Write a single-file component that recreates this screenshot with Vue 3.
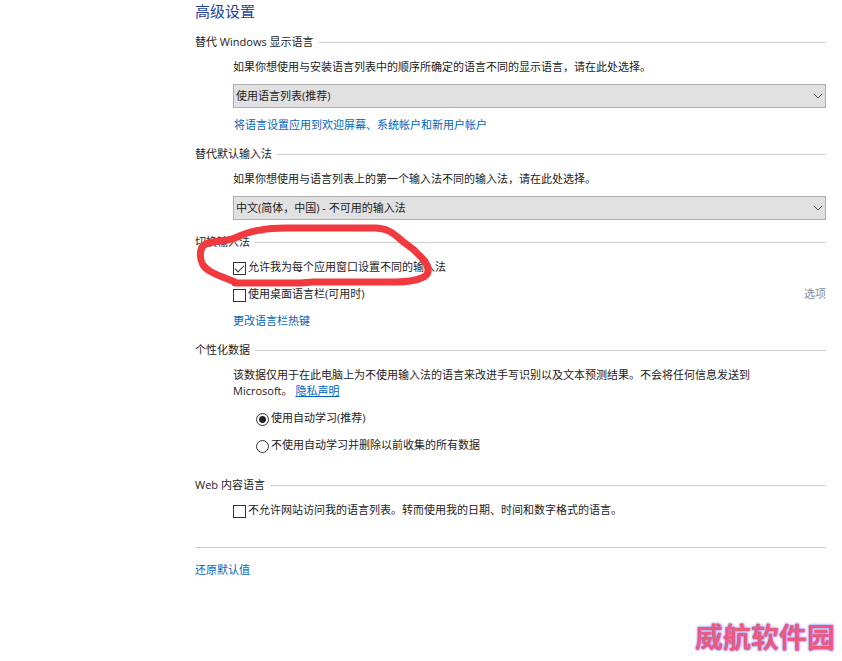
<script setup>
import { ref } from 'vue'

const displayLanguage = ref('list')
const inputMethod = ref('zh')
const perWindow = ref(true)
const languageBar = ref(false)
const learning = ref('auto')
const blockSites = ref(false)
</script>

<template>
  <main class="page">
    <h1 class="title">高级设置</h1>

    <section class="group">
      <h2 class="heading">替代 Windows 显示语言</h2>
      <div class="body">
        <label class="text" for="display-language">如果你想使用与安装语言列表中的顺序所确定的语言不同的显示语言，请在此处选择。</label>
        <div class="dropdown">
          <select id="display-language" v-model="displayLanguage">
            <option value="list">使用语言列表(推荐)</option>
          </select>
          <svg class="chevron" viewBox="0 0 10 6" aria-hidden="true"><path d="M1 1L5 5L9 1" /></svg>
        </div>
        <a class="link inset" href="#apply">将语言设置应用到欢迎屏幕、系统帐户和新用户帐户</a>
      </div>
    </section>

    <section class="group spaced">
      <h2 class="heading">替代默认输入法</h2>
      <div class="body">
        <label class="text" for="input-method">如果你想使用与语言列表上的第一个输入法不同的输入法，请在此处选择。</label>
        <div class="dropdown">
          <select id="input-method" v-model="inputMethod">
            <option value="zh">中文(简体，中国) - 不可用的输入法</option>
          </select>
          <svg class="chevron" viewBox="0 0 10 6" aria-hidden="true"><path d="M1 1L5 5L9 1" /></svg>
        </div>
      </div>
    </section>

    <section class="group marked">
      <h2 class="heading">切换输入法</h2>
      <div class="body choices">
        <label class="choice"><input v-model="perWindow" type="checkbox" />允许我为每个应用窗口设置不同的输入法</label>
        <div class="split">
          <label class="choice"><input v-model="languageBar" type="checkbox" />使用桌面语言栏(可用时)</label>
          <a class="options" href="#options">选项</a>
        </div>
        <a class="link" href="#hotkeys">更改语言栏热键</a>
      </div>
      <svg class="scribble" viewBox="0 0 240 64" aria-hidden="true">
        <path d="M40 55L30 51C20 47 12 44 8 38C5 33 4 24 8 19C14 13 30 15 40 11C50 6 56 4 66 3C75 1 83 1 91 1H180C192 1 198 6 205 12C211 18 216 19 222 26C228 32 232 35 233 42C234 49 228 51 220 53C207 56 195 55 178 55H118L106 56H40" />
      </svg>
    </section>

    <section class="group">
      <h2 class="heading">个性化数据</h2>
      <div class="body choices">
        <p class="text">该数据仅用于在此电脑上为不使用输入法的语言来改进手写识别以及文本预测结果。不会将任何信息发送到 Microsoft。 <a class="link underlined" href="#privacy">隐私声明</a></p>
        <label class="choice nested"><input v-model="learning" type="radio" name="learning" value="auto" />使用自动学习(推荐)</label>
        <label class="choice nested"><input v-model="learning" type="radio" name="learning" value="off" />不使用自动学习并删除以前收集的所有数据</label>
      </div>
    </section>

    <section class="group last">
      <h2 class="heading">Web 内容语言</h2>
      <div class="body">
        <label class="choice"><input v-model="blockSites" type="checkbox" />不允许网站访问我的语言列表。转而使用我的日期、时间和数字格式的语言。</label>
      </div>
    </section>

    <footer class="footer">
      <a class="link" href="#restore">还原默认值</a>
    </footer>

    <div class="watermark">威航软件园</div>
  </main>
</template>

<style>
body {
  margin: 0;
  background: #fff;
}
</style>

<style scoped>
.page {
  position: relative;
  box-sizing: border-box;
  min-height: 100vh;
  padding: 0 16px 0 195px;
  color: #1c1c1c;
  font-family: "Open Sans", "Noto Sans CJK SC", sans-serif;
  font-size: 11px;
  line-height: 16px;
}

.title {
  margin: 0 0 12px;
  color: #1f449c;
  font-size: 15px;
  font-weight: 400;
  line-height: 22px;
}

.group {
  margin-bottom: 13px;
}

.spaced {
  margin-bottom: 14px;
}

.heading {
  display: flex;
  align-items: center;
  gap: 5px;
  margin: 0;
  font-size: 11px;
  font-weight: 400;
}

.heading::after {
  flex: 1;
  height: 1px;
  background: #cdcdcd;
  content: "";
}

.body {
  display: flex;
  flex-direction: column;
  align-items: flex-start;
  gap: 9px;
  padding: 9px 0 0 38px;
}

.choices {
  gap: 11px;
}

.text {
  max-width: 540px;
  margin: 0;
}

.dropdown {
  position: relative;
  align-self: stretch;
}

select {
  display: block;
  box-sizing: border-box;
  width: 100%;
  height: 24px;
  padding: 0 24px 0 2px;
  border: 1px solid #adadad;
  border-radius: 0;
  background: #e1e1e1;
  color: inherit;
  font: inherit;
  appearance: none;
}

.chevron {
  position: absolute;
  top: 9px;
  right: 3px;
  width: 10px;
  height: 6px;
  fill: none;
  stroke: #555;
  pointer-events: none;
}

.link {
  color: #0066c0;
  text-decoration: none;
}

.inset {
  padding-left: 1px;
}

.underlined {
  text-decoration: underline;
}

.choice {
  display: flex;
  align-items: center;
  gap: 2px;
}

.nested {
  padding-left: 23px;
}

input {
  flex: none;
  box-sizing: border-box;
  width: 13px;
  height: 13px;
  margin: 2px 0 0;
  border: 1px solid #333;
  background: #fff;
  appearance: none;
}

input[type="checkbox"]:checked::before {
  display: block;
  box-sizing: border-box;
  width: 9px;
  height: 5px;
  margin: 2px 0 0 1px;
  border: solid #333;
  border-width: 0 0 1px 1px;
  transform: rotate(-45deg);
  content: "";
}

input[type="radio"] {
  border-radius: 50%;
}

input[type="radio"]:checked {
  background: radial-gradient(circle, #222 3px, #fff 4px);
}

.split {
  display: flex;
  align-self: stretch;
  justify-content: space-between;
}

.options {
  color: #858c9c;
  text-decoration: none;
}

.marked {
  position: relative;
}

.scribble {
  position: absolute;
  top: -7px;
  left: 0;
  width: 240px;
  height: 64px;
  overflow: visible;
  fill: none;
  stroke: #f03a3e;
  stroke-width: 7px;
  stroke-linecap: round;
  stroke-linejoin: round;
  pointer-events: none;
}

.last {
  margin: 24px 0 29px;
}

.footer {
  padding-top: 14px;
  border-top: 1px solid #cdcdcd;
}

.watermark {
  position: absolute;
  right: 7px;
  bottom: 6px;
  color: #ec5a7c;
  font-size: 28px;
  font-weight: 700;
  line-height: 36px;
  text-shadow: 0 0 2px #8880ff, 0 0 3px #a8a0ff;
}
</style>
